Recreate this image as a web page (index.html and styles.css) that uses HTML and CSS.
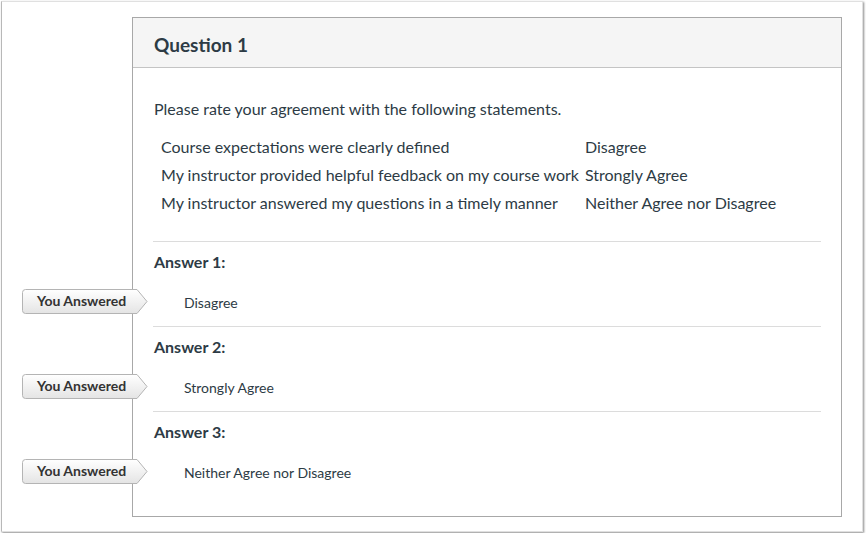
FILE: index.html
```html
<!DOCTYPE html>
<html lang="en">
<head>
    <meta charset="UTF-8">
    <meta name="viewport" content="width=device-width, initial-scale=1.0">
    <title>Question 1</title>
    <link rel="stylesheet" href="styles.css">
</head>
<body>
    <div class="frame">
        <div class="question">
            <div class="question-header">Question 1</div>
            <div class="question-body">
                <div class="question-text">Please rate your agreement with the following statements.</div>
                <div class="statements">
                    <div>Course expectations were clearly defined</div>
                    <div>Disagree</div>
                    <div>My instructor provided helpful feedback on my course work</div>
                    <div>Strongly Agree</div>
                    <div>My instructor answered my questions in a timely manner</div>
                    <div>Neither Agree nor Disagree</div>
                </div>

                <div class="answer-block">
                    <div class="answer-label">Answer 1:</div>
                    <div class="answer">
                        <div class="tag">
                            <svg class="tag-shape" width="126" height="25" viewBox="0 0 126 25">
                                <defs>
                                    <linearGradient id="tagFill" x1="0" y1="0" x2="0" y2="1">
                                        <stop offset="0" stop-color="#ffffff"/>
                                        <stop offset="1" stop-color="#e4e4e4"/>
                                    </linearGradient>
                                </defs>
                                <path d="M3.5 0.5 H115 L125 12.5 L115 24.5 H3.5 Q0.5 24.5 0.5 21.5 V3.5 Q0.5 0.5 3.5 0.5 Z" fill="url(#tagFill)" stroke="#b4b4b4"/>
                            </svg>
                            <span>You Answered</span>
                        </div>
                        Disagree
                    </div>
                </div>

                <div class="answer-block">
                    <div class="answer-label">Answer 2:</div>
                    <div class="answer">
                        <div class="tag">
                            <svg class="tag-shape" width="126" height="25" viewBox="0 0 126 25">
                                <path d="M3.5 0.5 H115 L125 12.5 L115 24.5 H3.5 Q0.5 24.5 0.5 21.5 V3.5 Q0.5 0.5 3.5 0.5 Z" fill="url(#tagFill)" stroke="#b4b4b4"/>
                            </svg>
                            <span>You Answered</span>
                        </div>
                        Strongly Agree
                    </div>
                </div>

                <div class="answer-block last">
                    <div class="answer-label">Answer 3:</div>
                    <div class="answer">
                        <div class="tag">
                            <svg class="tag-shape" width="126" height="25" viewBox="0 0 126 25">
                                <path d="M3.5 0.5 H115 L125 12.5 L115 24.5 H3.5 Q0.5 24.5 0.5 21.5 V3.5 Q0.5 0.5 3.5 0.5 Z" fill="url(#tagFill)" stroke="#b4b4b4"/>
                            </svg>
                            <span>You Answered</span>
                        </div>
                        Neither Agree nor Disagree
                    </div>
                </div>
            </div>
        </div>
    </div>
</body>
</html>
```

FILE: styles.css
```css
body {
    margin: 0;
    font-family: Lato, "Liberation Sans", sans-serif;
    color: #2d3b45;
    background-color: #ffffff;
}
.frame {
    margin: 1px;
    width: 860px;
    height: 529px;
    border: 1px solid #e0e0e0;
    border-left-color: #b8b8b8;
    box-shadow: 1px 1px 2px rgba(0, 0, 0, 0.45);
    overflow: hidden;
}
.question {
    margin: 15px 0 0 130px;
    width: 708px;
    height: 498px;
    border: 1px solid #a8a8a8;
}
.question-header {
    height: 49px;
    line-height: 53px;
    padding-left: 21px;
    background-color: #f5f5f5;
    border-bottom: 1px solid #c4c4c4;
    font-size: 19px;
    font-weight: bold;
}
.question-body {
    padding: 31px 20px 0 21px;
}
.question-text {
    font-size: 16px;
    line-height: 20px;
}
.statements {
    display: grid;
    grid-template-columns: 424px auto;
    margin: 14px 0 0 7px;
    font-size: 16px;
    line-height: 28px;
    white-space: nowrap;
}
.answer-block {
    border-top: 1px solid #dcdcdc;
    padding: 10px 0 13px 0;
    margin-left: -1px;
}
.statements + .answer-block {
    margin-top: 24px;
}
.answer-block.last {
    padding-bottom: 0;
}
.answer-label {
    padding-left: 1px;
    font-size: 16px;
    font-weight: bold;
    line-height: 20px;
}
.answer {
    position: relative;
    margin-top: 21px;
    padding-left: 31px;
    font-size: 14px;
    line-height: 20px;
}
.tag {
    position: absolute;
    left: -131px;
    top: -4px;
    width: 126px;
    height: 25px;
}
.tag-shape {
    position: absolute;
    left: 0;
    top: 0;
}
.tag span {
    position: relative;
    display: block;
    padding-left: 15px;
    line-height: 24px;
    font-size: 14px;
    font-weight: bold;
    color: #333333;
}
```
